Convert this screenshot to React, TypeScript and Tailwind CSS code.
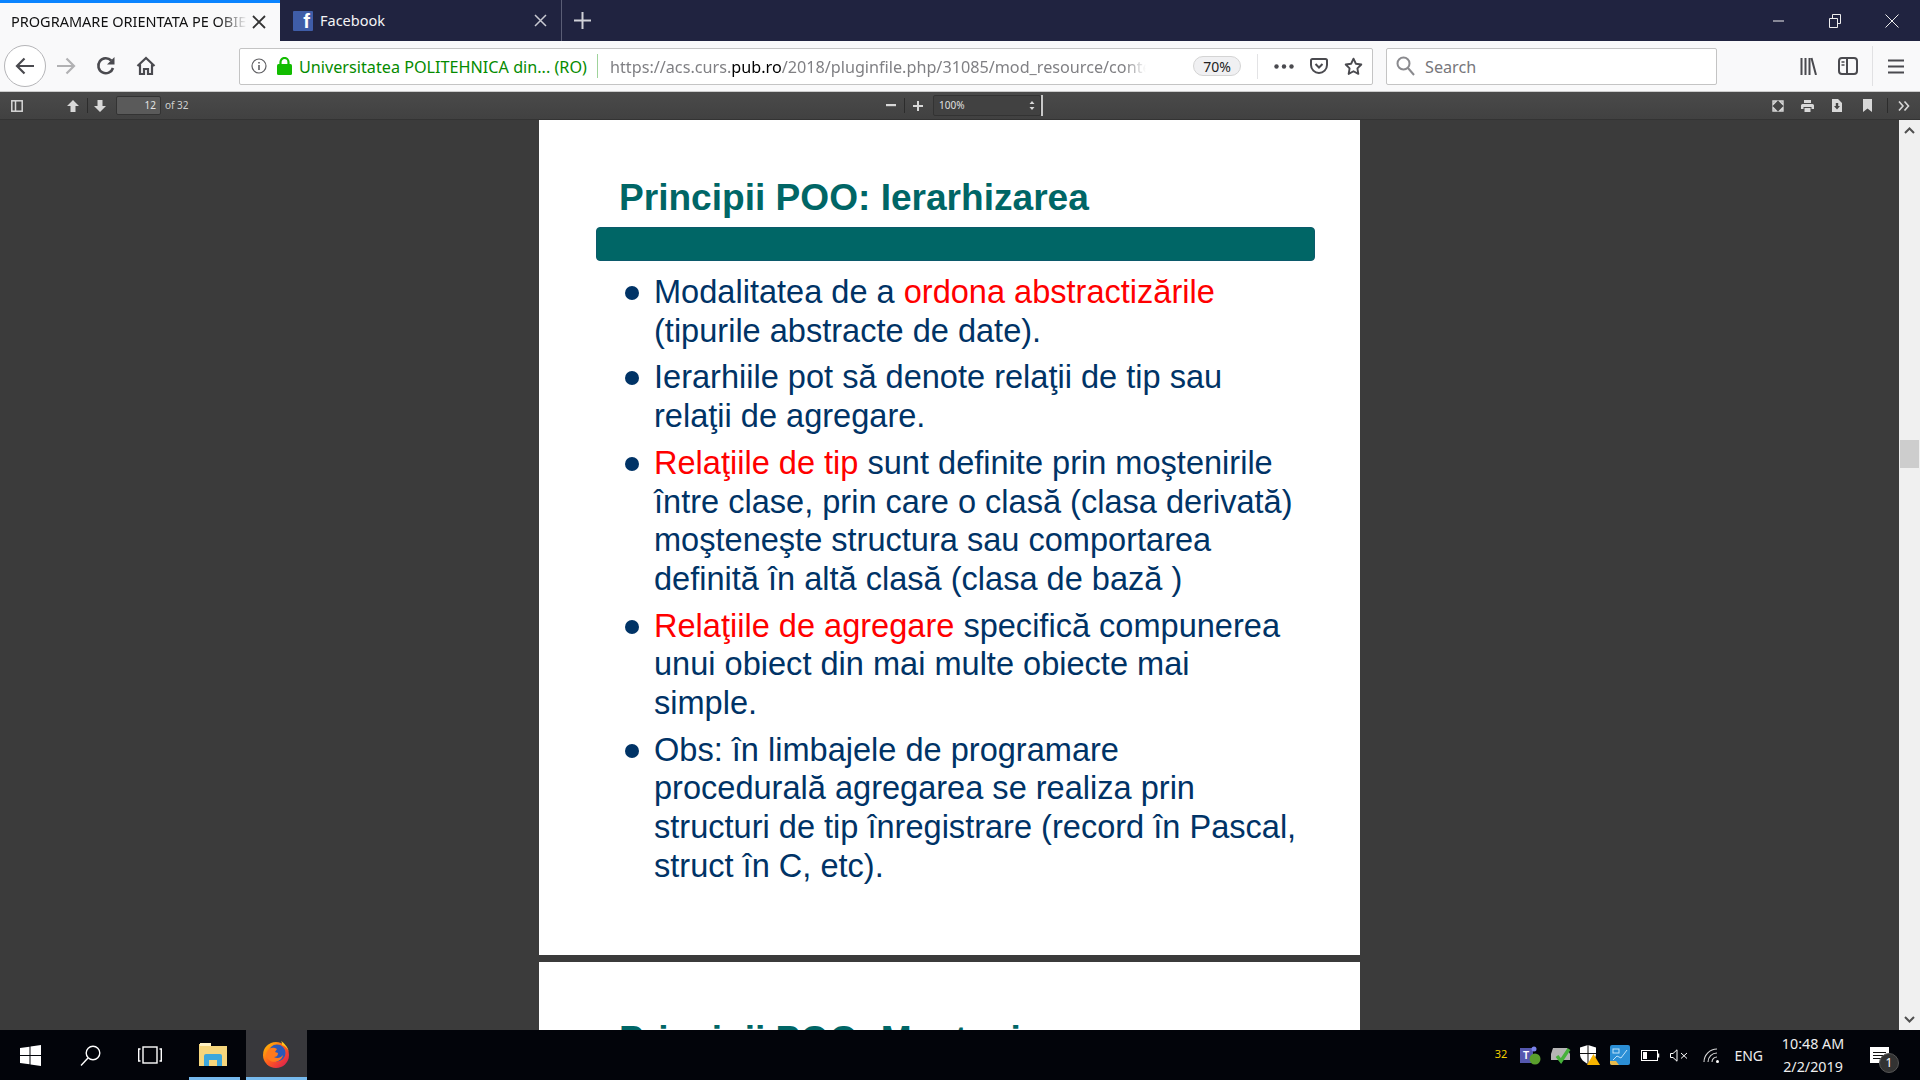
const UI = "font-['Noto_Sans',sans-serif]";

function Slot({ w, children, className = "" }: { w: string; children?: React.ReactNode; className?: string }) {
  return <div className={`flex h-full shrink-0 items-center justify-center ${w} ${className}`}>{children}</div>;
}

function TabBar() {
  return (
    <div className={`flex h-[41px] shrink-0 bg-[#202340] ${UI}`}>
      <div className="flex w-[280px] shrink-0 items-center border-t-[3px] border-[#0a84ff] bg-[#f9f9fa] pl-[11px] pb-[1px]">
        <span className="w-[236px] overflow-hidden whitespace-nowrap text-[14.5px] text-[#111] [mask-image:linear-gradient(to_right,black_88%,transparent)]">
          PROGRAMARE ORIENTATA PE OBIECTE
        </span>
        <svg width="14" height="14" viewBox="0 0 14 14" className="ml-[5px]" stroke="#333" strokeWidth="1.8"><path d="M1 1l12 12M13 1L1 13" /></svg>
      </div>
      <div className="flex w-[282px] shrink-0 items-center border-r border-[#5a5d75] pl-[13px]">
        <div className="flex h-[20px] w-[20px] items-end justify-end rounded-[1px] bg-[#3f5da8] pr-[3px] font-['Liberation_Sans',sans-serif] text-[20px] font-bold leading-[20px] text-white">f</div>
        <span className="ml-[7px] w-[214px] pt-[1px] text-[14.5px] text-[#f4f4f6]">Facebook</span>
        <svg width="13" height="13" viewBox="0 0 13 13" stroke="#c8c9d1" strokeWidth="1.5"><path d="M1 1l11 11M12 1L1 12" /></svg>
      </div>
      <Slot w="w-[29px]" className="ml-[6px]">
        <svg width="17" height="17" viewBox="0 0 17 17" stroke="#d0d1d8" strokeWidth="2"><path d="M8.5 0v17M0 8.5h17" /></svg>
      </Slot>
      <div className="flex-1" />
      <Slot w="w-[56px]" className="-translate-x-px">
        <svg width="11" height="2" viewBox="0 0 11 2" stroke="#eee"><path d="M0 1h11" /></svg>
      </Slot>
      <Slot w="w-[56px]">
        <svg width="12" height="14" viewBox="0 0 12 14" fill="none" stroke="#eee"><path d="M.5 4.5h8v9h-8zM3.5 4.5v-4h8v9h-3" /></svg>
      </Slot>
      <Slot w="w-[57px]">
        <svg width="14" height="14" viewBox="0 0 14 14" stroke="#eee"><path d="M.5.5l13 13M13.5.5l-13 13" /></svg>
      </Slot>
    </div>
  );
}

function NavBar() {
  const ic = "#4a4a4f";
  return (
    <div className={`flex h-[51px] shrink-0 items-center border-b border-[#ccc] bg-[#f9f9fa] ${UI}`}>
      <div className="ml-[4px] flex h-[42px] w-[42px] shrink-0 items-center justify-center rounded-full border border-[#b5b5b8] bg-white">
        <svg width="20" height="18" viewBox="0 0 20 18" fill="none" stroke={ic} strokeWidth="2.200"><path d="M19 9H2M9.500 1.500L2 9l7.500 7.500" /></svg>
      </div>
      <Slot w="w-[40px]">
        <svg width="20" height="18" viewBox="0 0 20 18" fill="none" stroke="#b1b1b3" strokeWidth="2.200"><path d="M1 9h17M10.500 1.500L18 9l-7.500 7.500" /></svg>
      </Slot>
      <Slot w="w-[40px]">
        <svg width="20" height="20" viewBox="0 0 20 20" fill="none"><path d="M17 12a7.500 7.500 0 1 1-1.800-7.500" stroke={ic} strokeWidth="2.600" /><path d="M18.500 1v7.500H11z" fill={ic} /></svg>
      </Slot>
      <Slot w="w-[40px]">
        <svg width="20" height="20" viewBox="0 0 20 20" fill="none" stroke={ic} strokeWidth="2.200"><path d="M1.500 10L10 2l8.500 8M4 8.500V18h4v-5h4v5h4V8.500" /></svg>
      </Slot>
      <div className="ml-[73px] flex h-[37px] w-[1134px] shrink-0 items-center rounded-[2px] border border-[#c4c4c4] bg-white">
        <Slot w="w-[18px]" className="ml-[10px]">
          <svg width="16" height="16" viewBox="0 0 16 16" fill="none" stroke="#5f5f63" strokeWidth="1.2"><circle cx="8" cy="8" r="7" /><path d="M8 7v5M8 4v1.600" strokeWidth="1.600" /></svg>
        </Slot>
        <Slot w="w-[16px]" className="ml-[8px]">
          <svg width="15" height="18" viewBox="0 0 15 18" fill="#12bc00"><rect y="7" width="15" height="11" rx="1.500" /><path d="M3.500 8V5a4 4 0 0 1 8 0v3" fill="none" stroke="#12bc00" strokeWidth="2.200" /></svg>
        </Slot>
        <span className="ml-[7px] w-[289px] whitespace-nowrap pt-[3px] text-[16.200px] text-[#058b00]">Universitatea POLITEHNICA din... (RO)</span>
        <div className="ml-[9px] h-[24px] w-px bg-[#9fd39b]" />
        <span className="ml-[12px] w-[536px] overflow-hidden whitespace-nowrap pt-[3px] text-[16.200px] text-[#808084] [mask-image:linear-gradient(to_right,black_96%,transparent)]">
          https://acs.curs.<span className="text-black">pub.ro</span>/2018/pluginfile.php/31085/mod_resource/content/1/curs
        </span>
        <div className="ml-[47px] flex h-[20px] w-[48px] items-center justify-center rounded-full border border-[#d4d4d4] bg-[#f0f0f2] text-[14px] text-[#222]">70%</div>
        <div className="ml-[16px] h-[25px] w-px bg-[#e3e3e5]" />
        <Slot w="w-[24px]" className="ml-[14px]">
          <svg width="20" height="5" viewBox="0 0 20 5" fill={ic}><circle cx="2.500" cy="2.500" r="2.200" /><circle cx="10" cy="2.500" r="2.200" /><circle cx="17.500" cy="2.500" r="2.200" /></svg>
        </Slot>
        <Slot w="w-[20px]" className="ml-[13px]">
          <svg width="18" height="18" viewBox="0 0 18 18" fill="none" stroke={ic} strokeWidth="2"><path d="M2.500 2h13A1.500 1.500 0 0 1 17 3.500V8a8 8 0 0 1-16 0V3.500A1.500 1.500 0 0 1 2.500 2z" /><path d="M5.500 7L9 10.500 12.500 7" /></svg>
        </Slot>
        <Slot w="w-[20px]" className="ml-[14px]">
          <svg width="19" height="19" viewBox="0 0 20 20" fill="none" stroke={ic} strokeWidth="2" strokeLinejoin="round"><path d="M10 1.800l2.500 5.300 5.700.8-4.100 4.100 1 5.800-5.100-2.800-5.100 2.800 1-5.800L1.800 7.900l5.700-.8z" /></svg>
        </Slot>
      </div>
      <div className="ml-[13px] flex h-[37px] w-[331px] shrink-0 items-center rounded-[2px] border border-[#c4c4c4] bg-white">
        <svg width="19" height="20" viewBox="0 0 19 20" fill="none" stroke="#8a8a8e" strokeWidth="2" className="ml-[9px]"><circle cx="7.500" cy="7.500" r="6" /><path d="M12 12l6 7" /></svg>
        <span className="ml-[10px] pt-[3px] text-[16.200px] text-[#77777b]">Search</span>
      </div>
      <Slot w="w-[20px]" className="ml-[81px]">
        <svg width="17" height="18" viewBox="0 0 17 18" stroke={ic} strokeWidth="2"><path d="M1.500 1v17M5.500 1v17M9.500 1v17M11.500 1l4.500 17" /></svg>
      </Slot>
      <Slot w="w-[20px]" className="ml-[20px]">
        <svg width="20" height="18" viewBox="0 0 20 18" fill="none" stroke={ic} strokeWidth="2"><rect x="1" y="1" width="18" height="16" rx="3" /><path d="M9 1v16" /><path d="M3.500 5h3M3.500 8h3" strokeWidth="1.500" /></svg>
      </Slot>
      <div className="ml-[14px] h-[40px] w-px bg-[#e1e1e3]" />
      <Slot w="w-[16px]" className="ml-[15px]">
        <svg width="16" height="15" viewBox="0 0 16 15" stroke={ic} strokeWidth="2.200"><path d="M0 1.500h16M0 7.500h16M0 13.500h16" /></svg>
      </Slot>
    </div>
  );
}

function PdfToolbar() {
  const c = "#d8d8d8";
  return (
    <div className={`flex h-[28px] shrink-0 items-center border-b border-[#333] bg-[linear-gradient(#4a4a4a,#414141)] ${UI}`}>
      <svg width="12" height="12" viewBox="0 0 12 12" fill="none" stroke={c} strokeWidth="1.500" className="ml-[11px]"><rect x=".8" y=".8" width="10.400" height="10.400" /><path d="M4.500 1v10" /></svg>
      <svg width="12" height="12" viewBox="0 0 12 12" fill={c} className="ml-[44px]"><path d="M6 0l6 6H8.500v6h-5V6H0z" /></svg>
      <div className="ml-[8px] h-[15px] w-px bg-[#2c2c2c]" />
      <svg width="12" height="12" viewBox="0 0 12 12" fill={c} className="ml-[6px]"><path d="M6 12L0 6h3.500V0h5v6H12z" /></svg>
      <div className="ml-[10px] flex h-[19px] w-[45px] items-center justify-end rounded-[2px] border border-[#333] bg-[#5a5a5a] pr-[4px] text-[10px] text-[#e4e4e4]">12</div>
      <span className="ml-[4px] w-[40px] text-[10px] text-[#cfcfcf]">of 32</span>
      <div className="ml-[681px] flex items-center">
        <svg width="10" height="3" viewBox="0 0 10 3" fill={c}><rect width="10" height="2.200" /></svg>
        <div className="mx-[8px] h-[15px] w-px bg-[#2c2c2c]" />
        <svg width="10" height="10" viewBox="0 0 10 10" fill={c}><path d="M4 0h2v4h4v2H6v4H4V6H0V4h4z" /></svg>
        <div className="ml-[10px] flex h-[21px] w-[108px] items-center justify-between rounded-[2px] border border-[#333] bg-[#414141] px-[5px] text-[10px] text-[#e0e0e0]">
          <span>100%</span>
          <svg width="6" height="9" viewBox="0 0 6 9" fill={c}><path d="M3 0l2.500 3h-5zM3 9L.5 6h5z" /></svg>
        </div>
        <div className="h-[21px] w-[2px] bg-[#c8c8c8]" />
      </div>
      <div className="flex-1" />
      <svg width="12" height="12" viewBox="0 0 12 12" fill="none" stroke={c} strokeWidth="1.400"><path d="M1 4.500V1h3.500L1 4.500zM11 4.500V1H7.500L11 4.500zM1 7.500V11h3.500L1 7.500zM11 7.500V11H7.500L11 7.500z" /></svg>
      <svg width="13" height="12" viewBox="0 0 13 12" fill={c} className="ml-[17px]"><path d="M3 0h7v3H3zM1.500 4h10A1.500 1.500 0 0 1 13 5.500V9h-2.500V7h-8v2H0V5.500A1.500 1.500 0 0 1 1.500 4zM3.500 8h6v4h-6z" /></svg>
      <svg width="10" height="13" viewBox="0 0 10 13" fill={c} className="ml-[18px]"><path d="M0 0h6l4 4v9H0z" /><path d="M3.800 4h2.400v3H8l-3 3.500L2 7h1.800z" fill="#444" /></svg>
      <svg width="9" height="13" viewBox="0 0 9 13" fill={c} className="ml-[21px]"><path d="M0 0h9v13L4.500 9.500 0 13z" /></svg>
      <div className="ml-[15px] h-[15px] w-px bg-[#2c2c2c]" />
      <svg width="12" height="10" viewBox="0 0 12 10" fill="none" stroke={c} strokeWidth="1.600" className="ml-[10px] mr-[10px]"><path d="M1 .5L5 5 1 9.500M6.500 .5L10.500 5l-4 4.500" /></svg>
    </div>
  );
}

function Line({ children }: { children: React.ReactNode }) {
  return <span className="block whitespace-nowrap">{children}</span>;
}

function Bullet({ lines }: { lines: React.ReactNode[] }) {
  return (
    <li className="flex">
      <span className="mt-[13px] h-[14px] w-[14px] shrink-0 rounded-full bg-[#003366]" />
      <div className="ml-[15px]">
        {lines.map((l, i) => (
          <Line key={i}>{l}</Line>
        ))}
      </div>
    </li>
  );
}

const Red = ({ children }: { children: React.ReactNode }) => <span className="text-[#ff0000]">{children}</span>;

function Slide() {
  return (
    <div className="h-[835px] w-[821px] shrink-0 bg-white pt-[53px] pl-[57px] font-['Liberation_Sans',sans-serif]">
      <h1 className="ml-[23px] text-[37.100px] font-bold leading-[48px] text-[#006666]">Principii POO: Ierarhizarea</h1>
      <div className="mt-[6px] h-[34px] w-[719px] rounded-[4px] border border-[#0b5a6b] bg-[#006666]" />
      <ul className="mt-[12px] ml-[29px] flex flex-col gap-[8px] text-[32.550px] leading-[38.700px] text-[#003366]">
        <Bullet lines={[<>Modalitatea de a <Red>ordona abstractizările</Red></>, "(tipurile abstracte de date)."]} />
        <Bullet lines={["Ierarhiile pot să denote relaţii de tip sau", "relaţii de agregare."]} />
        <Bullet
          lines={[
            <><Red>Relaţiile de tip</Red> sunt definite prin moştenirile</>,
            "între clase, prin care o clasă (clasa derivată)",
            "moşteneşte structura sau comportarea",
            "definită în altă clasă (clasa de bază )",
          ]}
        />
        <Bullet
          lines={[
            <><Red>Relaţiile de agregare</Red> specifică compunerea</>,
            "unui obiect din mai multe obiecte mai",
            "simple.",
          ]}
        />
        <Bullet
          lines={[
            "Obs: în limbajele de programare",
            "procedurală agregarea se realiza prin",
            "structuri de tip înregistrare (record în Pascal,",
            "struct în C, etc).",
          ]}
        />
      </ul>
    </div>
  );
}

function NextSlide() {
  return (
    <div className="mt-[7px] h-[200px] w-[821px] shrink-0 bg-white pt-[53px] pl-[80px] font-['Liberation_Sans',sans-serif]">
      <h2 className="text-[37.100px] font-bold leading-[48px] text-[#006666]">Principii POO: Moştenirea</h2>
    </div>
  );
}

function Scrollbar() {
  return (
    <div className="flex w-[21px] shrink-0 flex-col items-center bg-[#f0f0f0]">
      <div className="flex h-[21px] w-full items-center justify-center">
        <svg width="11" height="7" viewBox="0 0 11 7" fill="none" stroke="#505050" strokeWidth="2"><path d="M1 6l4.500-4.500L10 6" /></svg>
      </div>
      <div className="mt-[299px] h-[28px] w-[19px] bg-[#cdcdcd]" />
      <div className="flex-1" />
      <div className="flex h-[21px] w-full items-center justify-center">
        <svg width="11" height="7" viewBox="0 0 11 7" fill="none" stroke="#505050" strokeWidth="2"><path d="M1 1l4.500 4.500L10 1" /></svg>
      </div>
    </div>
  );
}

function Firefox() {
  return (
    <svg width="28" height="28" viewBox="0 0 28 28">
      <defs>
        <linearGradient id="ffx" x1="0" y1="0" x2="1" y2="1">
          <stop offset="0" stopColor="#ffcb00" />
          <stop offset=".5" stopColor="#ff5a1f" />
          <stop offset="1" stopColor="#d4145a" />
        </linearGradient>
      </defs>
      <circle cx="14" cy="15" r="13" fill="url(#ffx)" />
      <circle cx="15" cy="13" r="8.500" fill="#2b58b8" />
      <path d="M7 9c3-2 6-1 8 0l-2 3 3 1c0 3-2 4-4 4 3 2 7 1 9-2-1 6-9 9-14 5C3 17 4 12 7 9z" fill="#ff7a1c" />
      <path d="M19 1c3 2 7 6 8 11-1-3-4-6-7-7 0-1 0-3-1-4z" fill="#ffc61a" />
    </svg>
  );
}

function Taskbar() {
  return (
    <div className={`flex h-[50px] shrink-0 items-center bg-[#02040a] ${UI}`}>
      <svg width="21" height="21" viewBox="0 0 21 21" fill="#fff" className="ml-[20px]"><path d="M0 3l9.500-1.300v8.300H0zM10.500 1.500L21 0v10h-10.500zM0 11h9.500v8.300L0 18zM10.500 11H21v10l-10.500-1.500z" /></svg>
      <svg width="21" height="21" viewBox="0 0 21 21" fill="none" stroke="#fff" strokeWidth="1.400" className="ml-[39px]"><circle cx="13" cy="8" r="6.800" /><path d="M8 13L1 20.500" /></svg>
      <svg width="24" height="18" viewBox="0 0 24 18" fill="none" stroke="#fff" strokeWidth="1.400" className="ml-[37px]"><rect x="5" y="1" width="14" height="16" /><path d="M2.500 3H.7v12h1.800M21.500 3h1.800v12h-1.800" /></svg>
      <div className="ml-[27px] flex h-full w-[51px] items-center justify-center border-b-[3px] border-[#76b9ed] pr-[3px]">
        <svg width="28" height="24" viewBox="0 0 28 24">
          <path d="M0 2h10l2 2h16v20H0z" fill="#f6d67c" />
          <rect x="1" y="1" width="11" height="3" fill="#fff3c4" />
          <path d="M5 24V14a2 2 0 0 1 2-2h14a2 2 0 0 1 2 2v10h-5v-6h-8v6z" fill="#3da7dc" />
        </svg>
      </div>
      <div className="ml-[6px] flex h-full w-[61px] items-center justify-center border-b-[3px] border-[#76b9ed] bg-[#38383c] pr-[1px]">
        <Firefox />
      </div>
      <div className="flex-1" />
      <span className="mb-[2px] text-[11px] text-[#f4d000]">32</span>
      <svg width="22" height="20" viewBox="0 0 22 20" className="ml-[13px]">
        <rect x="0" y="3" width="13" height="15" fill="#5558af" />
        <text x="3" y="14" fontSize="10" fontWeight="bold" fill="#fff" fontFamily="Liberation Sans">T</text>
        <circle cx="14" cy="4" r="2.500" fill="#7b83eb" />
        <circle cx="15" cy="14" r="5.500" fill="#5aa02c" />
      </svg>
      <svg width="22" height="18" viewBox="0 0 22 18" className="ml-[8px]">
        <path d="M3 2h14l3 6v6H1V8z" fill="#b5b5b5" />
        <path d="M7 10l4 5 8-12" fill="none" stroke="#46b23a" strokeWidth="3.500" />
      </svg>
      <svg width="20" height="20" viewBox="0 0 20 20" className="ml-[8px]">
        <path d="M8 0l8 2.500V9c0 5-4 8-8 10-4-2-8-5-8-10V2.500z" fill="#fff" />
        <path d="M8 0v19M0 8.500h16" stroke="#111" strokeWidth="1" />
        <path d="M13.500 9L20 20H7z" fill="#f8b500" />
      </svg>
      <svg width="20" height="20" viewBox="0 0 20 20" className="ml-[10px]">
        <rect width="20" height="20" rx="2" fill="#2b8fd6" />
        <path d="M3 15l4-4 4 2 6-8" fill="none" stroke="#bfe3fa" strokeWidth="1" />
        <rect x="3" y="4" width="6" height="4" fill="none" stroke="#bfe3fa" strokeWidth="1" />
        <path d="M0 16h6l3 4H2a2 2 0 0 1-2-2z" fill="#e8b94a" />
      </svg>
      <svg width="19" height="11" viewBox="0 0 19 11" fill="none" stroke="#fff" className="ml-[11px]"><rect x=".5" y=".5" width="16" height="10" /><rect x="2" y="2" width="4" height="7" fill="#fff" stroke="none" /><path d="M17.500 3.500v4" strokeWidth="1.500" /></svg>
      <svg width="18" height="13" viewBox="0 0 18 13" fill="none" stroke="#fff" className="ml-[10px]"><path d="M.5 4.500h2.500L7 .8v11.400L3 8.500H.5zM11 4l6 5.500M17 4l-6 5.500" /></svg>
      <svg width="17" height="15" viewBox="0 0 17 15" fill="none" stroke="#d8d8d8" strokeWidth="1.100" className="ml-[15px]"><path d="M1 14A13 13 0 0 1 14 1M5 14a9 9 0 0 1 9-9M9 14a5 5 0 0 1 5-5" /><circle cx="14.500" cy="13.500" r="1.500" fill="#fff" stroke="none" /></svg>
      <span className="ml-[14px] text-[14px] text-[#eee]">ENG</span>
      <div className="ml-[18px] flex w-[64px] flex-col items-center text-[14.300px] leading-[23px] text-[#eee]">
        <span className="whitespace-nowrap">10:48 AM</span>
        <span className="whitespace-nowrap">2/2/2019</span>
      </div>
      <div className="relative ml-[25px] mr-[31px] flex h-[16px] w-[19px] flex-col justify-center gap-[2px] bg-white px-[3px]">
        <div className="h-px bg-[#111]" />
        <div className="h-px bg-[#111]" />
        <div className="h-px bg-[#111]" />
        <div className="absolute -right-[10px] -bottom-[10px] flex h-[20px] w-[20px] items-center justify-center rounded-full border border-[#555] bg-[#333] text-[12px] text-white">1</div>
      </div>
    </div>
  );
}

export default function App() {
  return (
    <div className="flex h-[1080px] w-[1920px] flex-col overflow-hidden">
      <TabBar />
      <NavBar />
      <PdfToolbar />
      <div className="flex min-h-0 flex-1">
        <main className="flex min-w-0 flex-1 flex-col overflow-hidden bg-[#3b3b3b] pl-[539px]">
          <Slide />
          <NextSlide />
        </main>
        <Scrollbar />
      </div>
      <Taskbar />
    </div>
  );
}
